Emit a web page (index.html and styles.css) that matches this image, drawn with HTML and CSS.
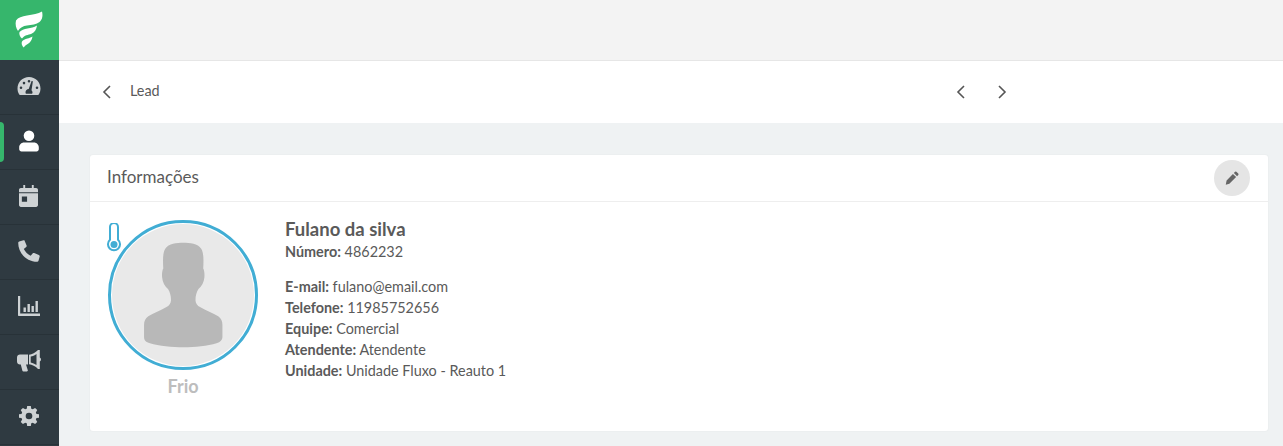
FILE: index.html
```html
<!DOCTYPE html>
<html lang="pt-BR">
<head>
<meta charset="utf-8">
<title>Lead</title>
<link rel="stylesheet" href="styles.css">
</head>
<body>
<div class="app">
  <nav class="sidebar">
    <div class="logo">
      <svg width="28" height="37" viewBox="0 0 28 37"><path fill="#fff" d="M1 9.500C3 6.500 7 5.500 12 4.500 18 3.500 23 3 27 .5c1 4 .5 8-2.500 10.500-3 2.500-8 3-12.500 3.500-4 .5-7 2-9 5.500C1 17.500 0 13 1 9.500z"/><path fill="#fff" d="M4.500 21c2-2 4.500-3 8-3.500 3.500-.5 6.500-1 9.500-3-.5 4-2.500 7-5.500 8.200-3.500 1.300-7 1.300-9.500 4.800C5 26 3.800 23 4.500 21z"/><path fill="#fff" d="M7 30.500c1-1.500 3-2.500 5.500-3 1.500-.3 3-.8 5-2-.5 3.500-2.200 6-4.800 7.500-1.700 1-3 2-4 3.500-1.500-1.500-2.700-4-1.700-6z"/></svg>
    </div>
    <a class="nav-item">
      <svg width="24" height="20" viewBox="0 0 24 20"><path fill="#ced2d4" fill-rule="evenodd" d="M12 1C5.600 1 .5 6.100.5 12.500c0 2.200.6 4.200 1.700 6 .2.300.5.500.9.500h17.800c.4 0 .7-.2.900-.5 1.100-1.800 1.700-3.800 1.700-6C23.500 6.100 18.400 1 12 1zm0 3a1.300 1.300 0 110 2.600A1.300 1.300 0 0112 4zM7 5.800a1.300 1.300 0 110 2.600 1.300 1.300 0 010-2.600zM4 10.500a1.300 1.300 0 110 2.600 1.300 1.300 0 010-2.600zm16 0a1.300 1.300 0 110 2.600 1.300 1.300 0 010-2.600zM14.600 5l1.300.3-1.400 9c.6.500 1 1.200 1 2 0 .5-.1 1-.4 1.400H8.900c-.3-.4-.4-.9-.4-1.400 0-1.700 1.400-3.100 3.200-3.300z"/></svg>
    </a>
    <a class="nav-item active">
      <span class="marker"></span>
      <svg width="20" height="22" viewBox="0 0 20 22"><circle fill="#fff" cx="10" cy="5.800" r="5.300"/><path fill="#fff" d="M5 12.500h10c2.700 0 4.800 2.200 4.800 4.800v1.900c0 1.200-1 2.200-2.200 2.200H2.400C1.200 21.400.2 20.400.2 19.200v-1.900c0-2.600 2.100-4.800 4.800-4.800z"/></svg>
    </a>
    <a class="nav-item">
      <svg width="19" height="22" viewBox="0 0 20 23"><path fill="#ced2d4" fill-rule="evenodd" d="M4.500 0h2v3h7V0h2v3H18c1.100 0 2 .9 2 2v2.500H0V5c0-1.100.9-2 2-2h2.500zM0 8.500h20V21c0 1.100-.9 2-2 2H2c-1.100 0-2-.9-2-2zm3 3.500v5.500h5.500V12z"/></svg>
    </a>
    <a class="nav-item">
      <svg width="22" height="22" viewBox="0 0 22 22"><path fill="#ced2d4" d="M5.500.3L1.200 1.500C.6 1.700.2 2.200.2 2.800c0 10.500 8.500 19 19 19 .6 0 1.100-.4 1.300-1l1.200-4.300c.1-.6-.2-1.300-.8-1.500l-4.700-2c-.6-.2-1.200-.1-1.600.4l-1.900 2.400c-3-1.500-5.400-4-6.900-6.900l2.400-1.900c.5-.4.600-1 .4-1.600l-2-4.700C6.800.5 6.100.2 5.500.3z"/></svg>
    </a>
    <a class="nav-item">
      <svg width="22" height="20" viewBox="0 0 22 20"><path fill="#ced2d4" d="M0 0h2.200v17.500H22V20H1C.4 20 0 19.600 0 19zM5.500 11.500h2.400V16H5.500zM9.500 8h2.400v8H9.500zM13.500 10h2.400v6h-2.400zM17.500 5h2.400v11h-2.400z"/></svg>
    </a>
    <a class="nav-item">
      <svg width="24" height="22" viewBox="0 0 24 22"><path fill="#ced2d4" fill-rule="evenodd" d="M21 0h1.800v7.500c.8.400 1.200 1.100 1.200 2s-.4 1.600-1.200 2V19H21c-2.500-2.800-6-4.400-9-4.700V4.700C15 4.400 18.500 2.800 21 0zm-1.500 4c-1.800 1.300-3.900 2.200-5.800 2.600v5.800c1.900.4 4 1.300 5.800 2.600zM3 4.500h8v10H9l1.800 5.800c.2.700-.3 1.200-1 1.200H6.400c-.5 0-.9-.3-1-.8L3.800 14.500H3c-1.700 0-3-1.300-3-3v-4c0-1.700 1.300-3 3-3z"/></svg>
    </a>
    <a class="nav-item">
      <svg width="20" height="20" viewBox="0 0 24 24"><path fill="#ced2d4" fill-rule="evenodd" d="M14.200 0l.5 3.200c.6.200 1.200.4 1.800.8l2.800-1.700 2.600 2.600-1.700 2.800c.3.600.6 1.200.8 1.800l3 .5v4l-3 .5c-.2.600-.5 1.200-.8 1.800l1.700 2.800-2.600 2.600-2.800-1.700c-.6.300-1.200.6-1.800.8l-.5 3.200h-4.400l-.5-3.200c-.6-.2-1.200-.5-1.800-.8l-2.800 1.700-2.600-2.600 1.700-2.800c-.3-.6-.6-1.200-.8-1.800l-3-.5v-4l3-.5c.2-.6.5-1.200.8-1.800L2.100 4.900l2.600-2.600 2.800 1.700c.6-.4 1.200-.6 1.800-.8L9.800 0zM12 8a4 4 0 100 8 4 4 0 000-8z"/></svg>
    </a>
  </nav>
  <main class="main">
    <div class="topbar"></div>
    <header class="header">
      <div class="back">
        <svg class="chev" width="10" height="14" viewBox="0 0 10 14"><path fill="none" stroke="#555" stroke-width="1.600" d="M8 1L2 7l6 6"/></svg>
        <span class="title">Lead</span>
      </div>
      <div class="pager">
        <svg class="chev" width="10" height="14" viewBox="0 0 10 14"><path fill="none" stroke="#555" stroke-width="1.600" d="M8 1L2 7l6 6"/></svg>
        <svg class="chev" width="10" height="14" viewBox="0 0 10 14"><path fill="none" stroke="#555" stroke-width="1.600" d="M2 1l6 6-6 6"/></svg>
      </div>
    </header>
    <section class="content">
      <div class="card">
        <div class="card-head">
          <h2>Informações</h2>
          <button class="edit" type="button" aria-label="Editar">
            <svg width="14" height="14" viewBox="0 0 15 15"><path fill="#666" d="M10.800.8a1 1 0 011.400 0l2 2a1 1 0 010 1.400l-1.300 1.300L9.500 2.100zM8.500 3.100l3.400 3.400-7.200 7.200-3.900.9.900-4.300z"/></svg>
          </button>
        </div>
        <div class="card-body">
          <div class="profile">
            <svg class="thermo" width="14" height="30" viewBox="0 0 14 30"><path fill="none" stroke="#41add4" stroke-width="2" d="M3 4a4 4 0 018 0V16.800a6 6 0 11-8 0z"/><circle fill="#41add4" cx="7" cy="21.500" r="3.500"/></svg>
            <div class="avatar">
              <svg width="142" height="142" viewBox="0 0 144 144"><path fill="#b8b8b8" d="M72 19c7 0 15 .8 18.500 6 2.500 4 2.500 11 2 20 1 1.500 1.500 5 1.200 9-.4 5-2.700 9-6 12-2 3-3.200 8-3 11.500.2 3 1.500 5 5 7 5 3 13 6 18 9 3 2 4.300 5 4.300 9v12c0 3-2 5-6 6.500-9 3-22 4-33.500 4s-25-1-34-4c-4-1.500-6-3-6-6.500v-12c0-4 1.300-7 4.300-9 5-3 13-6 18-9 3.500-2 4.800-4 5-7 .2-3.500-1-8.500-3-11.500-3.300-3-5.600-7-6-12-.3-4 .2-7.500 1.200-9-.5-9-.5-16 2-20 3.500-5.200 11.500-6 18.500-6z"/></svg>
            </div>
            <div class="temp">Frio</div>
          </div>
          <div class="details">
            <div class="name">Fulano da silva</div>
            <p class="line first"><b>Número:</b> 4862232</p>
            <p class="line gap"><b>E-mail:</b> fulano@email.com</p>
            <p class="line"><b>Telefone:</b> 11985752656</p>
            <p class="line"><b>Equipe:</b> Comercial</p>
            <p class="line"><b>Atendente:</b> Atendente</p>
            <p class="line"><b>Unidade:</b> Unidade Fluxo - Reauto 1</p>
          </div>
        </div>
      </div>
    </section>
  </main>
</div>
</body>
</html>
```
FILE: styles.css
```css
* { box-sizing: border-box; }
html, body { margin: 0; height: 100%; overflow: hidden; }
body { font-family: "Lato", "Open Sans", sans-serif; color: #5a5a5a; font-size: 14px; }
.app { display: flex; height: 446px; }
.sidebar { width: 59px; flex: none; background: #2f3a41; display: flex; flex-direction: column; }
.logo { height: 60px; background: #36b66c; display: flex; align-items: center; justify-content: center; padding: 0 1px 1px 0; }
.nav-item { position: relative; height: 55px; flex: none; display: flex; align-items: center; justify-content: center; border-bottom: 1px solid #283238; padding: 0 2px 3px 0; }
.marker { position: absolute; left: 0; top: 7px; width: 4px; height: 40px; background: #36b66c; border-radius: 0 4px 4px 0; }
.main { flex: 1; display: flex; flex-direction: column; min-width: 0; }
.topbar { height: 61px; flex: none; background: #f3f3f3; border-bottom: 1px solid #e6e6e6; }
.header { height: 62px; flex: none; background: #fff; display: flex; align-items: center; padding-left: 43px; }
.back { display: flex; align-items: center; gap: 18px; width: 854px; }
.title { font-size: 14.400px; line-height: 17px; margin-top: -3px; }
.pager { display: flex; gap: 31px; }
.chev { display: block; }
.content { flex: 1; background: #eff2f3; padding: 32px 15px 15px 31px; min-height: 0; }
.card { background: #fff; border-radius: 3px; height: 276px; box-shadow: 0 0 2px rgba(0,0,0,.06); }
.card-head { height: 47px; border-bottom: 1px solid #eeeeee; display: flex; align-items: center; justify-content: space-between; padding: 0 18px 0 17px; }
h2 { margin: -3px 0 0; font-size: 17px; font-weight: 400; }
.edit { width: 36px; height: 36px; border: 0; padding: 0; border-radius: 50%; background: #e5e5e5; display: flex; align-items: center; justify-content: center; margin-top: -1px; }
.card-body { display: flex; padding: 18px 18px 0; }
.profile { position: relative; width: 150px; flex: none; margin-right: 27px; display: flex; flex-direction: column; align-items: center; }
.thermo { position: absolute; left: -1px; top: 3px; z-index: 1; }
.avatar { width: 150px; height: 150px; border-radius: 50%; border: 3px solid #41add4; padding: 1px; background: #fff; display: flex; align-items: center; justify-content: center; }
.avatar svg { display: block; border-radius: 50%; background: #e9e9e9; flex: none; }
.temp { font-size: 18px; line-height: 22px; font-weight: 700; color: #bdbdbd; margin-top: 5px; }
.name { font-size: 18.500px; font-weight: 700; line-height: 20px; margin-top: -1px; }
.line { margin: 0; line-height: 21px; font-size: 14.400px; }
.line.first { margin-top: 1.500px; }
.line.gap { margin-top: 14px; }
```
